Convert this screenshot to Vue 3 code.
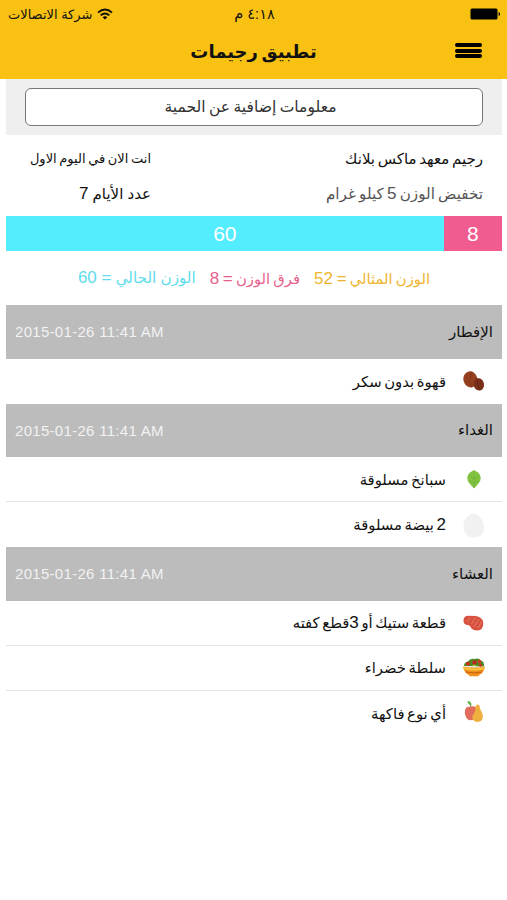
<template>
  <div class="app" dir="rtl">
    <header class="header">
      <div class="status">
        <svg class="battery" width="31" height="12" viewBox="0 0 31 12">
          <rect x="0.5" y="0.5" width="27" height="11" rx="1.5" />
          <path d="M28.6 4v4q1.5-.5 1.5-2t-1.5-2z" />
        </svg>
        <span class="time">٤:١٨ م</span>
        <div class="carrier">
          <svg width="16" height="12" viewBox="0 0 16 12">
            <g fill="none" stroke="#111" stroke-width="1.9">
              <path d="M1 4.6Q8-1.6 15 4.6" />
              <path d="M3.6 7.4q4.4-3.8 8.8 0" />
            </g>
            <path d="M5.7 9.2q2.3-2 4.6 0L8 11.5z" />
          </svg>
          <span>شركة الاتصالات</span>
        </div>
      </div>
      <div class="nav">
        <div class="menu"><i></i><i></i><i></i></div>
        <h1 class="title">تطبيق رجيمات</h1>
      </div>
    </header>

    <main class="content">
      <div class="more">
        <button class="more-button">معلومات إضافية عن الحمية</button>
      </div>

      <div class="summary">
        <span class="diet-name">رجيم معهد ماكس بلانك</span>
        <span class="day">انت الان في اليوم الاول</span>
        <span class="goal">تخفيض الوزن <b>5</b> كيلو غرام</span>
        <span class="days">عدد الأيام <b>7</b></span>
      </div>

      <div class="bar">
        <div class="bar-diff" :style="{ width: diffWidth }">{{ diff }}</div>
        <div class="bar-current">{{ current }}</div>
      </div>

      <div class="legend">
        <span class="ideal">الوزن المثالي <b>= {{ current - diff }}</b></span>
        <span class="diff">فرق الوزن <b>= {{ diff }}</b></span>
        <span class="current">الوزن الحالي <b>= {{ current }}</b></span>
      </div>

      <section v-for="meal in meals" :key="meal.name" class="meal">
        <div class="meal-head">
          <span class="meal-name">{{ meal.name }}</span>
          <span class="meal-time" dir="ltr">{{ meal.time }}</span>
        </div>
        <div v-for="item in meal.items" :key="item.icon" class="item">
          <svg class="icon" width="24" height="26" viewBox="0 0 24 26">
            <g v-if="item.icon === 'coffee'">
              <ellipse cx="8.4" cy="11.4" rx="7" ry="8.2" fill="#94401f" transform="rotate(-12 8.4 11.4)" />
              <path d="M9.5 4q-3 7-.5 15" fill="none" stroke="#843819" stroke-width="1" />
              <ellipse cx="16.8" cy="16.4" rx="5.2" ry="6.2" fill="#7a2f18" transform="rotate(-12 16.8 16.4)" />
              <path d="M15.5 11q-.5 6 2.500 11" fill="none" stroke="#652612" stroke-width="1" />
            </g>
            <g v-else-if="item.icon === 'leaf'">
              <path d="M12 4q2 1.300 3.800 2.200 2.700 1.800 3 5.300 0 3.500-2.300 6-2 2.500-3.500 3.700l-1 1.300-1-1.300Q9.500 20 7.500 17.500q-2.300-2.500-2.300-6 .3-3.500 3-5.300Q10 5.300 12 4z" fill="#82c341" />
              <path d="M12 7v15M7.500 10l4.500 3 4.500-3M8 14.500l4 3 4-3" fill="none" stroke="#6fb238" stroke-width="0.9" />
            </g>
            <path v-else-if="item.icon === 'egg'" d="M11 1q-1.800 0-3 1.500Q1 7 1.500 15 2 25 12 25.500q10-.5 10-10Q21 3 11 1z" fill="#f1f1f2" />
            <g v-else-if="item.icon === 'steak'">
              <path d="M1.500 10.500Q1.500 6 6.500 5.800l7.500.2q7 1.200 7.300 7.500 0 6.500-6 7-5.300 0-6.800-3.800-1-2-3.300-1.600Q1.500 14.500 1.500 10.500z" fill="#d8513f" />
              <path d="M5 12l3.500-4.500M9.500 14l4-6.500M12 17l5-8M16 18l3.500-6" fill="none" stroke="#e67c6a" stroke-width="1" />
            </g>
            <g v-else-if="item.icon === 'salad'">
              <path d="M2 11q0-4 4-4.500Q8 3 12 4q5-1.500 7 1.500 3.500 1 3 6z" fill="#4c8a24" />
              <circle cx="6" cy="8.800" r="2" fill="#cf2a20" />
              <circle cx="12.500" cy="7.500" r="2.300" fill="#b92a1c" />
              <circle cx="17.500" cy="6.500" r="1.800" fill="#d83425" />
              <circle cx="18.500" cy="10" r="1.500" fill="#cf2a20" />
              <path d="M10 11l2-1.500 3 1.500" fill="#a6d04a" />
              <path d="M1 11.500q11 2 22 0-1 6.500-6 8.500l-.5 1.300h-9L7 20q-5-2-6-8.500z" fill="#f0911d" />
              <path d="M1.200 12q11 2.800 21.600 0l-.5 2q-10.300 3-20.600 0z" fill="#fbc33f" />
              <path d="M3.800 17q8.200 2 16.400 0" fill="none" stroke="#c9600d" stroke-width="1" />
            </g>
            <g v-else>
              <path d="M8.500 7q4-2 6 1 1.500 4-.5 8.500-1.500 4-4.500 3.500-3 .8-5-2Q2 14 3 10q1.500-4.500 5.500-3z" fill="#e26d5b" />
              <path d="M8.800 7q.2-2-1-3" fill="none" stroke="#7b5a2b" />
              <path d="M5.500 1q4 0 4 4-4 0-4-4z" fill="#65b54a" />
              <path d="M15.500 4.500q2.300 0 2.500 3.500.3 2 2 4.500 2.500 7-2 9-4 1.200-6.500-1-2.500-3.500.5-7Q13.500 11 13.500 8q0-3.500 2-3.500z" fill="#eeb13f" />
            </g>
          </svg>
          <span class="item-text">{{ item.before }}<b v-if="item.count">{{ item.count }}</b>{{ item.text }}</span>
        </div>
      </section>
    </main>
  </div>
</template>

<script setup>
import { ref, computed } from 'vue'

const current = ref(60)
const diff = ref(8)
const diffWidth = computed(() => (diff.value / (current.value + diff.value)) * 100 + '%')

const meals = ref([
  {
    name: 'الإفطار',
    time: '2015-01-26 11:41 AM',
    items: [{ icon: 'coffee', text: 'قهوة بدون سكر' }]
  },
  {
    name: 'الغداء',
    time: '2015-01-26 11:41 AM',
    items: [
      { icon: 'leaf', text: 'سبانخ مسلوقة' },
      { icon: 'egg', count: 2, text: ' بيضة مسلوقة' }
    ]
  },
  {
    name: 'العشاء',
    time: '2015-01-26 11:41 AM',
    items: [
      { icon: 'steak', before: 'قطعة ستيك أو ', count: 3, text: 'قطع كفته' },
      { icon: 'salad', text: 'سلطة خضراء' },
      { icon: 'fruit', text: 'أي نوع فاكهة' }
    ]
  }
])
</script>

<style>
body {
  margin: 0;
  background: #fff;
}
</style>

<style scoped>
.app {
  height: 900px;
  overflow: hidden;
  background: #fff;
  color: #111;
  font-family: 'Liberation Sans', 'DejaVu Sans', sans-serif;
  font-size: 15px;
  white-space: nowrap;
}

/* 数字比阿拉伯文字稍大 */
b {
  font-weight: normal;
  font-size: 17px;
  line-height: 1;
}

/* 顶部 */
.header {
  height: 79px;
  background: #f9c213;
}

.status {
  display: grid;
  grid-template-columns: 1fr auto 1fr;
  align-items: center;
  height: 28px;
  padding: 0 6px 0 8px;
}

.time {
  font-size: 14.5px;
}

.carrier {
  display: flex;
  justify-content: flex-end;
  align-items: center;
  gap: 5px;
  font-size: 13px;
}

.nav {
  display: grid;
  grid-template-columns: 1fr auto 1fr;
  align-items: center;
  height: 48px;
  padding: 0 25px;
}

.menu {
  display: flex;
  flex-direction: column;
  gap: 1.5px;
  width: 27px;
  margin-bottom: 3px;
}

.menu i {
  height: 4px;
  border-radius: 2px;
  background: #000;
}

.title {
  margin: 0;
  font-size: 18px;
  font-weight: bold;
  word-spacing: -1.5px;
}

.content {
  margin: 0 5px 0 6px;
}

.more {
  height: 56px;
  box-sizing: border-box;
  padding: 9px 19px;
  background: #efeff0;
}

.more-button {
  display: block;
  width: 100%;
  height: 38px;
  padding: 0 7px 0 0;
  border: 1px solid #777;
  border-radius: 6px;
  background: #fff;
  color: #333;
  font-family: inherit;
  font-size: 15.6px;
  word-spacing: -1px;
}

.summary {
  display: grid;
  grid-template-columns: 332px 1fr;
  grid-auto-rows: 35px;
  align-items: center;
  box-sizing: border-box;
  height: 81px;
  padding: 6px 19px 5px 24px;
}

.diet-name {
  word-spacing: -1.5px;
}

.day {
  font-size: 13px;
  word-spacing: -1px;
}

.goal {
  color: #555;
  font-size: 15.2px;
  word-spacing: -1px;
}

/* 体重条 */
.bar {
  display: flex;
  height: 35px;
  line-height: 36px;
  text-align: center;
  color: #fff;
  font-size: 21px;
}

.bar-diff {
  background: #f05b90;
}

.bar-current {
  flex: 1;
  background: #54ecff;
}

.legend {
  display: flex;
  justify-content: center;
  align-items: center;
  gap: 14px;
  height: 54px;
  font-size: 14.8px;
  word-spacing: -1px;
}

.ideal {
  color: #efb52e;
}

.diff {
  color: #e8608c;
}

.current {
  color: #5fdcec;
  font-size: 15.2px;
  word-spacing: 0;
}

.meal-head {
  display: flex;
  justify-content: space-between;
  align-items: center;
  height: 53.5px;
  padding: 0 9px;
  background: #bcbcbc;
}

.meal-time {
  color: #f2f2f2;
  font-size: 15px;
  letter-spacing: 0.3px;
}

.item {
  display: flex;
  align-items: center;
  box-sizing: border-box;
  height: 45px;
  padding-right: 16px;
  gap: 16px;
}

.item-text {
  font-size: 14.8px;
  word-spacing: -1.5px;
}

.item:not(:last-child) {
  border-bottom: 1px solid #e4e4e4;
}
</style>
